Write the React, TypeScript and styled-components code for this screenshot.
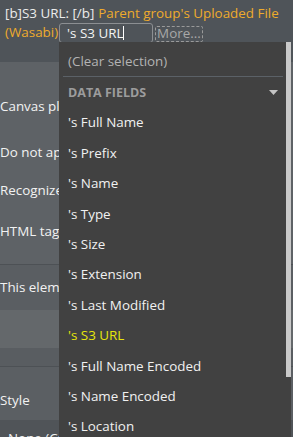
import React from "react";
import styled, { createGlobalStyle } from "styled-components";

const Global = createGlobalStyle`
  html, body { margin: 0; padding: 0; background: #5e6266; }
  body { font-family: "Open Sans", "Noto Sans", sans-serif; font-size: 13.4px; }
`;

const Page = styled.div`
  position: relative;
  width: 293px;
  height: 437px;
  overflow: hidden;
  background: #5e6266;
  color: #f0f0f0;
`;

const Header = styled.div`
  background: #4f5459;
  height: 62px;
  box-sizing: border-box;
  padding: 4px 0 0 5px;
  line-height: 19px;
  font-size: 13.4px;
  white-space: nowrap;
`;

const Plain = styled.span`
  color: #ececec;
  margin-right: 4px;
`;

const Orange = styled.span`
  color: #eeab2c;
`;

const InputBox = styled.span`
  display: inline-block;
  vertical-align: top;
  box-sizing: border-box;
  width: 94px;
  height: 20px;
  margin-left: 1px;
  padding-left: 7px;
  border: 1px solid #8c8f92;
  border-radius: 3px;
  color: #f4f4f4;
  line-height: 18px;
`;

const Caret = styled.span`
  display: inline-block;
  width: 1px;
  height: 14px;
  background: #ffffff;
  vertical-align: -2px;
`;

const MoreBox = styled.span`
  display: inline-block;
  vertical-align: top;
  margin-top: 3px;
  margin-left: 2px;
  padding: 0 1px;
  height: 14px;
  line-height: 13px;
  border: 1px dashed #9a9a9a;
  border-radius: 2px;
  color: #a8a8a8;
`;

const Section = styled.div<{ $bg: string; $h: number; $line?: boolean }>`
  background: ${(p) => p.$bg};
  height: ${(p) => p.$h}px;
  box-sizing: border-box;
  border-top: ${(p) => (p.$line ? "1px solid #4d5155" : "none")};
  display: flex;
  flex-direction: column;
`;

const Label = styled.div<{ $top: number; $left?: number }>`
  margin-top: ${(p) => p.$top}px;
  padding-left: ${(p) => p.$left ?? 0}px;
  box-sizing: border-box;
  width: 59px;
  overflow: hidden;
  height: 20px;
  line-height: 20px;
  color: #f2f2f2;
  white-space: nowrap;
`;

const Menu = styled.div`
  position: absolute;
  left: 59px;
  top: 42px;
  width: 232px;
  height: 400px;
  background: #414141;
  box-sizing: border-box;
  padding: 4px 8px 0 4px;
`;

const Scrollbar = styled.div`
  position: absolute;
  right: 0;
  top: 0;
  width: 5px;
  height: 335px;
  background: #c9c9c9;
`;

const Item = styled.div<{ $active?: boolean; $muted?: boolean }>`
  height: 30.4px;
  line-height: 30.4px;
  padding-left: 5px;
  white-space: nowrap;
  color: ${(p) => (p.$active ? "#e6e60a" : p.$muted ? "#b3b3b3" : "#f1f1f1")};
`;

const Divider = styled.div`
  height: 1px;
  background: #5b6167;
`;

const GroupHead = styled.div`
  height: 30px;
  display: flex;
  align-items: center;
  justify-content: space-between;
  padding-left: 5px;
  padding-right: 5px;
  font-size: 12.5px;
  font-weight: 700;
  color: #9c9c9c;
`;

const items = [
  "'s Full Name",
  "'s Prefix",
  "'s Name",
  "'s Type",
  "'s Size",
  "'s Extension",
  "'s Last Modified",
  "'s S3 URL",
  "'s Full Name Encoded",
  "'s Name Encoded",
  "'s Location",
];

export default function App() {
  return (
    <Page>
      <Global />
      <Header>
        <Plain>[b]S3 URL: [/b]</Plain>
        <Orange>Parent group's Uploaded File</Orange>
        <br />
        <Orange>(Wasabi)</Orange>
        <InputBox>
          's S3 URL<Caret />
        </InputBox>
        <MoreBox>More...</MoreBox>
      </Header>
      <Section $bg="#5e6266" $h={202}>
        <Label $top={34}>Canvas placement</Label>
        <Label $top={26}>Do not apply</Label>
        <Label $top={18}>Recognize</Label>
        <Label $top={21}>HTML tag</Label>
      </Section>
      <Section $bg="#5a5e62" $h={46} $line>
        <Label $top={12}>This element</Label>
      </Section>
      <Section $bg="#64686b" $h={38} />
      <Section $bg="#595d61" $h={18} />
      <Section $bg="#5b5f63" $h={54} $line>
        <Label $top={23}>Style</Label>
      </Section>
      <Section $bg="#505458" $h={40}>
        <Label $top={8} $left={8}>None (Custom)</Label>
      </Section>
      <Menu>
        <Scrollbar />
        <Item $muted>(Clear selection)</Item>
        <Divider />
        <GroupHead>
          DATA FIELDS
          <svg width="9" height="5" viewBox="0 0 9 5">
            <path d="M0 0 H9 L4.5 5 Z" fill="#c4c4c4" />
          </svg>
        </GroupHead>
        {items.map((t) => (
          <Item key={t} $active={t === "'s S3 URL"}>
            {t}
          </Item>
        ))}
      </Menu>
    </Page>
  );
}
